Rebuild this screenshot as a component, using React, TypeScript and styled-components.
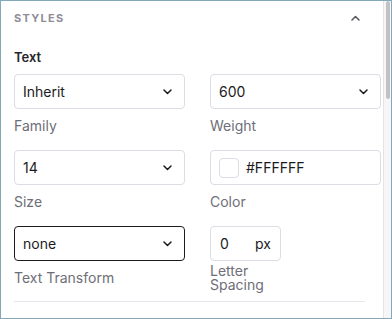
import styled, { createGlobalStyle } from 'styled-components'

const GlobalStyle = createGlobalStyle`
  body {
    margin: 0;
    font-family: Inter, "Noto Sans", sans-serif;
  }
`

const Panel = styled.div`
  box-sizing: border-box;
  display: flex;
  width: 392px;
  height: 319px;
  border: 1px solid #82a8ba;
  background: #fff;
`

const ScrollArea = styled.div`
  flex: 1;
  overflow-y: auto;
  scrollbar-width: none;

  &::-webkit-scrollbar {
    display: none;
  }
`

const ScrollTrack = styled.div`
  box-sizing: border-box;
  width: 8px;
  padding: 0 1px 0 2px;
  background: #f6f6f6;
  border-left: 1px solid #e4e4e4;
`

const ScrollThumb = styled.div`
  height: 98px;
  border-radius: 3px;
  background: #c2c2c2;
`

const Content = styled.div`
  padding: 9px 0 0 13px;
  min-height: 1015px;
`

const SectionHeader = styled.div`
  display: flex;
  align-items: center;
  justify-content: space-between;
  height: 16px;
  padding-right: 23px;
`

const SectionTitle = styled.h2`
  margin: 0;
  font-size: 11px;
  line-height: 16px;
  font-weight: 700;
  letter-spacing: 1.3px;
  color: #8d8d97;
`

const Toggle = styled.button`
  display: flex;
  align-items: center;
  border: 0;
  padding: 0;
  background: none;
  color: #55555c;
  cursor: pointer;
`

const GroupTitle = styled.h3`
  margin: 23px 0 9px;
  font-size: 13px;
  line-height: 16px;
  font-weight: 600;
  color: #27272a;
`

const FieldGrid = styled.div`
  display: grid;
  grid-template-columns: 171px 171px;
  column-gap: 25px;
  row-gap: 8px;
`

const Field = styled.div<{ $width?: number }>`
  display: flex;
  flex-direction: column;
  width: ${p => (p.$width ? `${p.$width}px` : 'auto')};
`

const Box = styled.div<{ $active?: boolean; $compact?: boolean }>`
  box-sizing: border-box;
  display: flex;
  align-items: center;
  gap: 7px;
  height: 35px;
  padding: ${p => (p.$compact ? '0 9px' : '0 12px 0 8px')};
  border: 1px solid ${p => (p.$active ? '#1c1c1e' : '#dcdce4')};
  border-radius: 4px;
  font-size: 14px;
  color: #1b1b1d;
  background: #fff;
`

const Value = styled.span`
  flex: 1;
`

const Unit = styled.span`
  color: #1b1b1d;
`

const Swatch = styled.span<{ $color: string }>`
  box-sizing: border-box;
  width: 20px;
  height: 20px;
  border: 1px solid #dcdce4;
  border-radius: 4px;
  background: ${p => p.$color};
`

const Label = styled.label`
  display: flex;
  align-items: center;
  height: 33px;
  font-size: 14px;
  line-height: 14px;
  color: #6e6e78;
`

const Divider = styled.hr`
  margin: 7px 18px 0 0;
  border: 0;
  height: 1px;
  background: #e6e6ec;
`

function Chevron({ up }: { up?: boolean }) {
  return (
    <svg width="9" height="6" viewBox="0 0 9 6" fill="none">
      <polyline
        points={up ? '1,5 4.5,1.5 8,5' : '1,1 4.5,4.5 8,1'}
        stroke="currentColor"
        strokeWidth="1.5"
        strokeLinecap="round"
        strokeLinejoin="round"
      />
    </svg>
  )
}

function SelectField({ value, label, active }: { value: string; label: string; active?: boolean }) {
  return (
    <Field>
      <Box $active={active}>
        <Value>{value}</Value>
        <Chevron />
      </Box>
      <Label>{label}</Label>
    </Field>
  )
}

export default function App() {
  return (
    <>
      <GlobalStyle />
      <Panel>
        <ScrollArea>
          <Content>
            <SectionHeader>
              <SectionTitle>STYLES</SectionTitle>
              <Toggle aria-label="Collapse">
                <Chevron up />
              </Toggle>
            </SectionHeader>
            <GroupTitle>Text</GroupTitle>
            <FieldGrid>
              <SelectField value="Inherit" label="Family" />
              <SelectField value="600" label="Weight" />
              <SelectField value="14" label="Size" />
              <Field>
                <Box>
                  <Swatch $color="#FFFFFF" />
                  <Value>#FFFFFF</Value>
                </Box>
                <Label>Color</Label>
              </Field>
              <SelectField value="none" label="Text Transform" active />
              <Field $width={71}>
                <Box $compact>
                  <Value>0</Value>
                  <Unit>px</Unit>
                </Box>
                <Label>Letter Spacing</Label>
              </Field>
            </FieldGrid>
            <Divider />
          </Content>
        </ScrollArea>
        <ScrollTrack>
          <ScrollThumb />
        </ScrollTrack>
      </Panel>
    </>
  )
}
